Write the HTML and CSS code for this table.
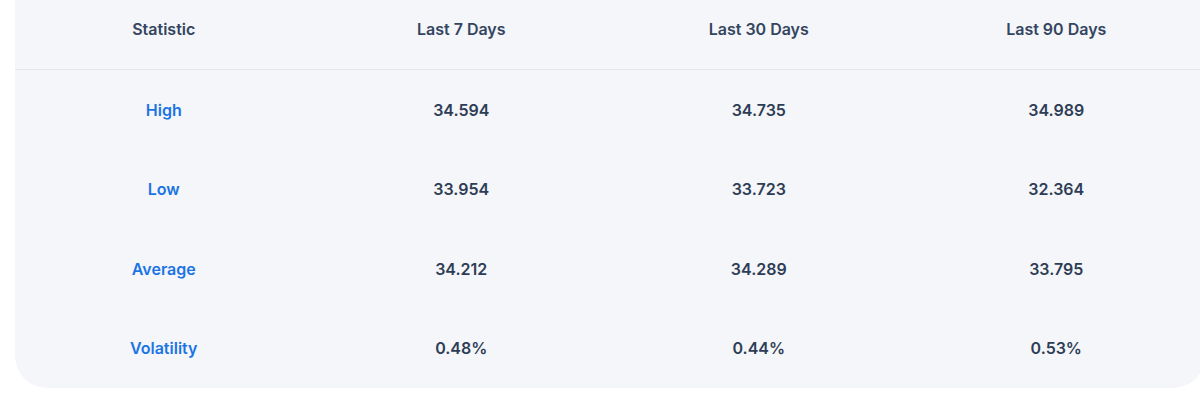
FILE: index.html
```html
<!DOCTYPE html>
<html lang="en">
<head>
<meta charset="utf-8">
<title>Statistics</title>
<link rel="stylesheet" href="styles.css">
</head>
<body>
<div class="card">
  <div class="row head">
    <div class="cell">Statistic</div>
    <div class="cell">Last 7 Days</div>
    <div class="cell">Last 30 Days</div>
    <div class="cell">Last 90 Days</div>
  </div>
  <div class="row">
    <div class="cell label">High</div>
    <div class="cell">34.594</div>
    <div class="cell">34.735</div>
    <div class="cell">34.989</div>
  </div>
  <div class="row">
    <div class="cell label">Low</div>
    <div class="cell">33.954</div>
    <div class="cell">33.723</div>
    <div class="cell">32.364</div>
  </div>
  <div class="row">
    <div class="cell label">Average</div>
    <div class="cell">34.212</div>
    <div class="cell">34.289</div>
    <div class="cell">33.795</div>
  </div>
  <div class="row">
    <div class="cell label">Volatility</div>
    <div class="cell">0.48%</div>
    <div class="cell">0.44%</div>
    <div class="cell">0.53%</div>
  </div>
</div>
</body>
</html>
```

FILE: styles.css
```css
html, body {
  margin: 0;
  padding: 0;
  background: #ffffff;
  overflow: hidden;
}

body {
  font-family: Inter, "Noto Sans", sans-serif;
  font-weight: 600;
  font-size: 16px;
  color: #334155;
}

.card {
  width: 1190px;
  margin: -11px 0 0 15px;
  background: #f5f6f9;
  border-radius: 0 0 32px 32px;
}

.row {
  display: grid;
  grid-template-columns: repeat(4, 1fr);
  height: 79.5px;
  align-items: center;
}

.row.head {
  height: 81px;
  border-bottom: 1px solid #e3e6ea;
  box-sizing: border-box;
}

.cell {
  text-align: center;
  color: #2e3d56;
}

.head .cell {
  color: #334560;
}

.cell.label {
  color: #1b74e4;
}
```
